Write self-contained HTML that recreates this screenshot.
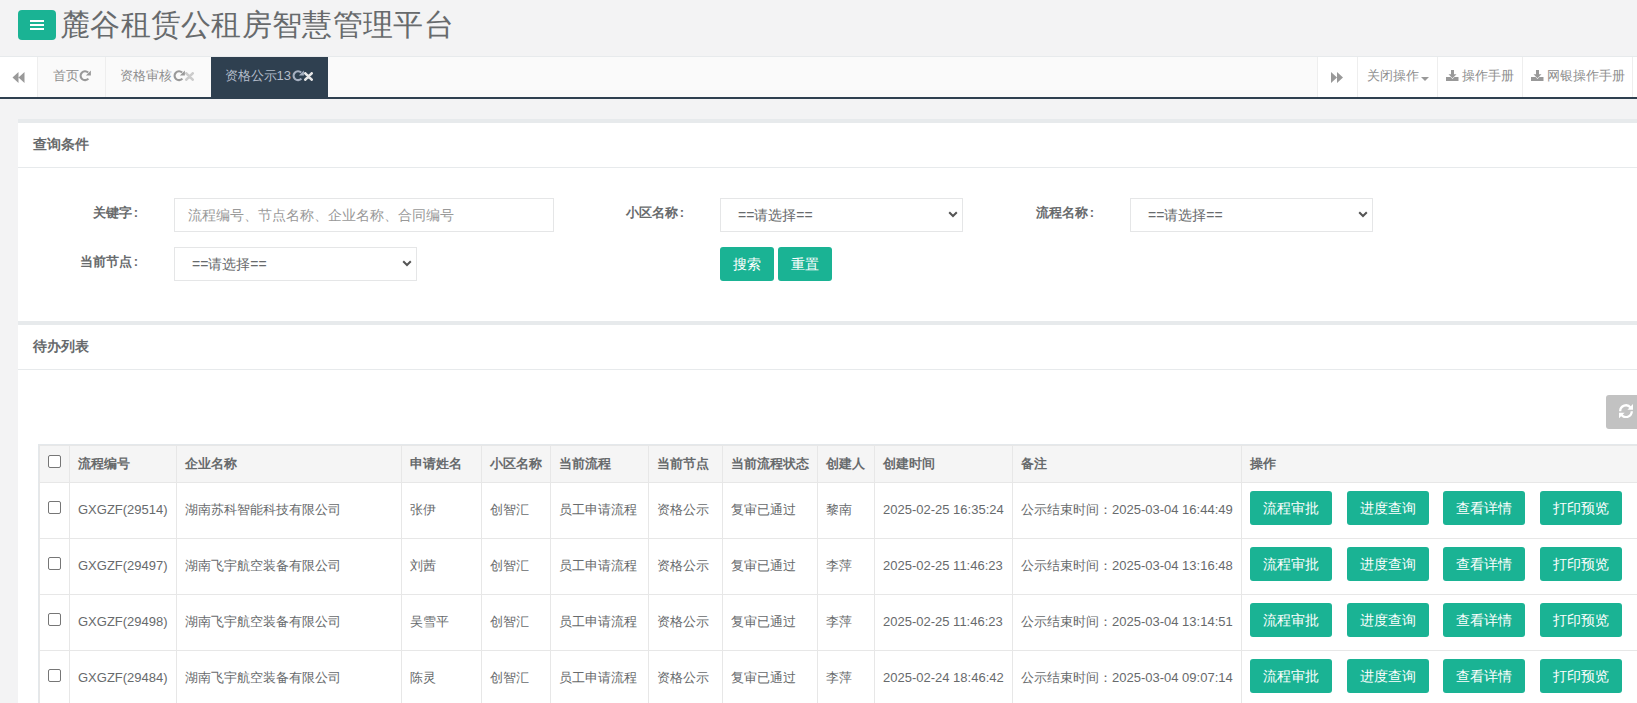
<!DOCTYPE html>
<html><head><meta charset="utf-8">
<style>
*{box-sizing:border-box;margin:0;padding:0}
html,body{width:1637px;height:703px;overflow:hidden}
body{background:#f3f3f4;font-family:"Liberation Sans",sans-serif;color:#676a6c;font-size:13px;position:relative}
.a{position:absolute;white-space:nowrap}
/* header */
#menu{left:18px;top:10px;width:38px;height:30px;background:#1ab394;border-radius:4px}
#menu i{position:absolute;left:12px;width:14px;height:2px;background:#fff}
#title{left:60px;top:4.6px;letter-spacing:0.3px;font-size:30px;line-height:40px;color:#676a6c}
#hdrline{left:0;top:56px;width:1637px;height:1px;background:#e7eaec}
/* tabs */
#tabs{left:0;top:57px;width:1637px;height:42px;background:#fafafa;border-bottom:2px solid #2f4050}
.tb{position:absolute;top:0;height:40px;line-height:38px;color:#8e8e8e;font-size:13px;white-space:nowrap}
.bl{border-left:1px solid #eee}
.br{border-right:1px solid #eee}
/* panels */
.panel{position:absolute;left:18px;width:1619px;background:#fff;border-top:4px solid #e7eaec}
.ptitle{position:absolute;left:15px;top:0;height:44px;line-height:42px;font-weight:bold;font-size:14px;color:#676a6c}
.pline{position:absolute;left:0;top:44px;width:100%;height:1px;background:#e7eaec}
.lbl{position:absolute;font-weight:bold;font-size:13px;line-height:20px;text-align:right;white-space:nowrap}
.ctl{position:absolute;height:34px;border:1px solid #e5e6e7;background:#fff;font-size:14px;line-height:32px;white-space:nowrap;color:#676a6c}
.btn{position:absolute;background:#1ab394;color:#fff;border-radius:3px;text-align:center;font-size:14px;line-height:34px;height:34px;white-space:nowrap}
/* table */
#tbl{position:absolute;left:38px;top:444px;width:1700px;height:300px;border-top:1px solid #e7e7e7;border-left:1px solid #e7e7e7}
.hl{position:absolute;left:0;width:1700px;height:1px;background:#e7e7e7}
.vl{position:absolute;top:0;width:1px;height:300px;background:#e7e7e7}
.cell{position:absolute;font-size:13px;line-height:20px;white-space:nowrap}
.th{font-weight:bold}
.cb{position:absolute;left:10px;width:13px;height:13px;border:1px solid #767676;border-radius:2px;background:#fff}
</style></head><body>

<div class="a" id="menu"><i style="top:10px"></i><i style="top:14px"></i><i style="top:18px"></i></div>
<div class="a" id="title">麓谷租赁公租房智慧管理平台</div>
<div class="a" id="hdrline"></div>

<div class="a" id="tabs">
  <div class="tb br" style="left:0;width:38px;background:#fff"></div>
  <svg class="a" style="left:11.5px;top:14.8px" width="13" height="11" viewBox="0 0 13 11"><path d="M6.5 0 L0.5 5.5 L6.5 11 Z M12.5 0 L6.5 5.5 L12.5 11 Z" fill="#999"/></svg>
  <div class="tb br" style="left:38px;width:68px;padding-left:15px">首页</div>
  <svg class="a" style="left:78.8px;top:13.4px" width="12" height="12" viewBox="0 0 12 12"><path d="M9.4 8.6 A4.45 4.45 0 1 1 9.15 2.55" fill="none" stroke="#999" stroke-width="2.1"/><path d="M11.9 0.6 L11.9 5.6 L6.9 5.6 Z" fill="#999"/></svg>
  <div class="tb" style="left:106px;width:105px;padding-left:14.4px">资格审核</div>
  <svg class="a" style="left:172.8px;top:13.4px" width="12" height="12" viewBox="0 0 12 12"><path d="M9.4 8.6 A4.45 4.45 0 1 1 9.15 2.55" fill="none" stroke="#999" stroke-width="2.1"/><path d="M11.9 0.6 L11.9 5.6 L6.9 5.6 Z" fill="#999"/></svg><svg class="a" style="left:185px;top:14.8px" width="9" height="9" viewBox="0 0 9 9"><path d="M1.3 1.3 L7.7 7.7 M7.7 1.3 L1.3 7.7" stroke="#ccc" stroke-width="2.6" stroke-linecap="round"/></svg>
  <div class="tb" style="left:211px;width:117px;padding-left:13.6px;background:#2f4050;color:#b4bdcb">资格公示13</div>
  <svg class="a" style="left:291.6px;top:13.4px" width="12" height="12" viewBox="0 0 12 12"><path d="M9.4 8.6 A4.45 4.45 0 1 1 9.15 2.55" fill="none" stroke="#a7b1c2" stroke-width="2.1"/><path d="M11.9 0.6 L11.9 5.6 L6.9 5.6 Z" fill="#a7b1c2"/></svg><svg class="a" style="left:304px;top:14.6px" width="9" height="9" viewBox="0 0 9 9"><path d="M1.3 1.3 L7.7 7.7 M7.7 1.3 L1.3 7.7" stroke="#e6e6e6" stroke-width="2.6" stroke-linecap="round"/></svg>
  <div class="tb bl" style="left:1317px;width:41px;background:#fff"></div>
  <svg class="a" style="left:1331px;top:14.8px" width="12" height="11" viewBox="0 0 12 11"><path d="M0 0 L6 5.5 L0 11 Z M6 0 L12 5.5 L6 11 Z" fill="#999"/></svg>
  <div class="tb bl" style="left:1357px;width:81px;background:#fff;padding-left:9px">关闭操作</div>
  <svg class="a" style="left:1421px;top:19.9px" width="8" height="4" viewBox="0 0 8 4"><path d="M0 0 L8 0 L4 4 Z" fill="#999"/></svg>
  <div class="tb bl" style="left:1437px;width:86px;background:#fff;padding-left:24px">操作手册</div>
  <svg class="a" style="left:1446px;top:13px" width="13" height="11" viewBox="0 0 13 11"><path d="M5 0 H8 V4.2 H10.5 L6.5 8.3 L2.5 4.2 H5 Z" fill="#999"/><path d="M0 7 H4.6 L6.5 9 L8.4 7 H12.5 V11 H0 Z" fill="#999"/></svg>
  <div class="tb bl br" style="left:1522px;width:111px;background:#fff;padding-left:24px">网银操作手册</div>
  <svg class="a" style="left:1530.5px;top:13px" width="13" height="11" viewBox="0 0 13 11"><path d="M5 0 H8 V4.2 H10.5 L6.5 8.3 L2.5 4.2 H5 Z" fill="#999"/><path d="M0 7 H4.6 L6.5 9 L8.4 7 H12.5 V11 H0 Z" fill="#999"/></svg>
  <div class="tb" style="left:1633px;width:4px;background:#fff"></div>
</div>
<div class="panel" style="top:119px;height:202px">
  <div class="ptitle">查询条件</div>
  <div class="pline"></div>
</div>

<div class="lbl" style="right:1499px;top:203px">关键字<span style="margin-left:2px">:</span></div>
<div class="ctl" style="left:174px;top:198px;width:380px;padding-left:13px;color:#999">流程编号、节点名称、企业名称、合同编号</div>
<div class="lbl" style="right:953px;top:203px">小区名称<span style="margin-left:2px">:</span></div>
<div class="ctl" style="left:720px;top:198px;width:243px;padding-left:17px">==请选择==</div>
<svg class="a" style="left:948px;top:211px" width="10" height="7" viewBox="0 0 10 7"><path d="M1.2 1.2 L5 5 L8.8 1.2" fill="none" stroke="#555" stroke-width="2"/></svg>
<div class="lbl" style="right:543px;top:203px">流程名称<span style="margin-left:2px">:</span></div>
<div class="ctl" style="left:1130px;top:198px;width:243px;padding-left:17px">==请选择==</div>
<svg class="a" style="left:1358px;top:211px" width="10" height="7" viewBox="0 0 10 7"><path d="M1.2 1.2 L5 5 L8.8 1.2" fill="none" stroke="#555" stroke-width="2"/></svg>
<div class="lbl" style="right:1499px;top:252px">当前节点<span style="margin-left:2px">:</span></div>
<div class="ctl" style="left:174px;top:247px;width:243px;padding-left:17px">==请选择==</div>
<svg class="a" style="left:402px;top:260px" width="10" height="7" viewBox="0 0 10 7"><path d="M1.2 1.2 L5 5 L8.8 1.2" fill="none" stroke="#555" stroke-width="2"/></svg>
<div class="btn" style="left:720px;top:247px;width:54px">搜索</div>
<div class="btn" style="left:778px;top:247px;width:54px">重置</div>
<div class="panel" style="top:321px;height:400px">
  <div class="ptitle">待办列表</div>
  <div class="pline"></div>
</div>

<div class="a" style="left:1606px;top:395px;width:40px;height:34px;background:#c2c2c2;border-radius:3px"></div>
<svg class="a" style="left:1619px;top:403.8px" width="14" height="14.4" viewBox="0 0 14 14.4"><path d="M1.2 7.2 A5.8 5.8 0 0 1 11.6 3.6" fill="none" stroke="#fff" stroke-width="2.3"/><path d="M14 0.1 L14 5.7 L8.4 5.7 Z" fill="#fff"/><path d="M12.8 7.2 A5.8 5.8 0 0 1 2.4 10.8" fill="none" stroke="#fff" stroke-width="2.3"/><path d="M0 14.3 L0 8.7 L5.6 8.7 Z" fill="#fff"/></svg>
<div class="a" style="left:38px;top:444px;width:1599px;height:38px;background:#f5f5f5"></div>
<div class="a" style="left:38px;top:483px;width:1599px;height:230px;background:#fff"></div>
<div class="a" style="left:38px;top:444px;width:1599px;height:1px;background:#e4e8eb"></div><div class="a" style="left:39px;top:445px;width:1598px;height:1px;background:#e7e7e7"></div>
<div class="a" style="left:38px;top:444px;width:1px;height:270px;background:#e4e8eb"></div><div class="a" style="left:39px;top:445px;width:1px;height:270px;background:#e7e7e7"></div>
<div class="a" style="left:38px;top:482px;width:1599px;height:1px;background:#e7e7e7"></div>
<div class="a" style="left:38px;top:538px;width:1599px;height:1px;background:#e7e7e7"></div>
<div class="a" style="left:38px;top:594px;width:1599px;height:1px;background:#e7e7e7"></div>
<div class="a" style="left:38px;top:650px;width:1599px;height:1px;background:#e7e7e7"></div>
<div class="a" style="left:38px;top:706px;width:1599px;height:1px;background:#e7e7e7"></div>
<div class="a" style="left:69px;top:446px;width:1px;height:270px;background:#e7e7e7"></div>
<div class="a" style="left:176px;top:446px;width:1px;height:270px;background:#e7e7e7"></div>
<div class="a" style="left:401px;top:446px;width:1px;height:270px;background:#e7e7e7"></div>
<div class="a" style="left:481px;top:446px;width:1px;height:270px;background:#e7e7e7"></div>
<div class="a" style="left:550px;top:446px;width:1px;height:270px;background:#e7e7e7"></div>
<div class="a" style="left:648px;top:446px;width:1px;height:270px;background:#e7e7e7"></div>
<div class="a" style="left:722px;top:446px;width:1px;height:270px;background:#e7e7e7"></div>
<div class="a" style="left:817px;top:446px;width:1px;height:270px;background:#e7e7e7"></div>
<div class="a" style="left:874px;top:446px;width:1px;height:270px;background:#e7e7e7"></div>
<div class="a" style="left:1012px;top:446px;width:1px;height:270px;background:#e7e7e7"></div>
<div class="a" style="left:1241px;top:446px;width:1px;height:270px;background:#e7e7e7"></div>
<div class="cell th" style="left:78px;top:446px;line-height:36px">流程编号</div>
<div class="cell th" style="left:185px;top:446px;line-height:36px">企业名称</div>
<div class="cell th" style="left:410px;top:446px;line-height:36px">申请姓名</div>
<div class="cell th" style="left:490px;top:446px;line-height:36px">小区名称</div>
<div class="cell th" style="left:559px;top:446px;line-height:36px">当前流程</div>
<div class="cell th" style="left:657px;top:446px;line-height:36px">当前节点</div>
<div class="cell th" style="left:731px;top:446px;line-height:36px">当前流程状态</div>
<div class="cell th" style="left:826px;top:446px;line-height:36px">创建人</div>
<div class="cell th" style="left:883px;top:446px;line-height:36px">创建时间</div>
<div class="cell th" style="left:1021px;top:446px;line-height:36px">备注</div>
<div class="cell th" style="left:1250px;top:446px;line-height:36px">操作</div>
<div class="cb" style="left:48px;top:455px"></div>
<div class="cb" style="left:48px;top:501px"></div>
<div class="cell" style="left:78px;top:481.5px;line-height:55px">GXGZF(29514)</div>
<div class="cell" style="left:185px;top:481.5px;line-height:55px">湖南苏科智能科技有限公司</div>
<div class="cell" style="left:410px;top:481.5px;line-height:55px">张伊</div>
<div class="cell" style="left:490px;top:481.5px;line-height:55px">创智汇</div>
<div class="cell" style="left:559px;top:481.5px;line-height:55px">员工申请流程</div>
<div class="cell" style="left:657px;top:481.5px;line-height:55px">资格公示</div>
<div class="cell" style="left:731px;top:481.5px;line-height:55px">复审已通过</div>
<div class="cell" style="left:826px;top:481.5px;line-height:55px">黎南</div>
<div class="cell" style="left:883px;top:481.5px;line-height:55px">2025-02-25 16:35:24</div>
<div class="cell" style="left:1021px;top:481.5px;line-height:55px">公示结束时间：2025-03-04 16:44:49</div>
<div class="btn" style="left:1250px;top:491px;width:82px">流程审批</div>
<div class="btn" style="left:1347px;top:491px;width:82px">进度查询</div>
<div class="btn" style="left:1443px;top:491px;width:82px">查看详情</div>
<div class="btn" style="left:1540px;top:491px;width:82px">打印预览</div>
<div class="cb" style="left:48px;top:557px"></div>
<div class="cell" style="left:78px;top:537.5px;line-height:55px">GXGZF(29497)</div>
<div class="cell" style="left:185px;top:537.5px;line-height:55px">湖南飞宇航空装备有限公司</div>
<div class="cell" style="left:410px;top:537.5px;line-height:55px">刘茜</div>
<div class="cell" style="left:490px;top:537.5px;line-height:55px">创智汇</div>
<div class="cell" style="left:559px;top:537.5px;line-height:55px">员工申请流程</div>
<div class="cell" style="left:657px;top:537.5px;line-height:55px">资格公示</div>
<div class="cell" style="left:731px;top:537.5px;line-height:55px">复审已通过</div>
<div class="cell" style="left:826px;top:537.5px;line-height:55px">李萍</div>
<div class="cell" style="left:883px;top:537.5px;line-height:55px">2025-02-25 11:46:23</div>
<div class="cell" style="left:1021px;top:537.5px;line-height:55px">公示结束时间：2025-03-04 13:16:48</div>
<div class="btn" style="left:1250px;top:547px;width:82px">流程审批</div>
<div class="btn" style="left:1347px;top:547px;width:82px">进度查询</div>
<div class="btn" style="left:1443px;top:547px;width:82px">查看详情</div>
<div class="btn" style="left:1540px;top:547px;width:82px">打印预览</div>
<div class="cb" style="left:48px;top:613px"></div>
<div class="cell" style="left:78px;top:593.5px;line-height:55px">GXGZF(29498)</div>
<div class="cell" style="left:185px;top:593.5px;line-height:55px">湖南飞宇航空装备有限公司</div>
<div class="cell" style="left:410px;top:593.5px;line-height:55px">吴雪平</div>
<div class="cell" style="left:490px;top:593.5px;line-height:55px">创智汇</div>
<div class="cell" style="left:559px;top:593.5px;line-height:55px">员工申请流程</div>
<div class="cell" style="left:657px;top:593.5px;line-height:55px">资格公示</div>
<div class="cell" style="left:731px;top:593.5px;line-height:55px">复审已通过</div>
<div class="cell" style="left:826px;top:593.5px;line-height:55px">李萍</div>
<div class="cell" style="left:883px;top:593.5px;line-height:55px">2025-02-25 11:46:23</div>
<div class="cell" style="left:1021px;top:593.5px;line-height:55px">公示结束时间：2025-03-04 13:14:51</div>
<div class="btn" style="left:1250px;top:603px;width:82px">流程审批</div>
<div class="btn" style="left:1347px;top:603px;width:82px">进度查询</div>
<div class="btn" style="left:1443px;top:603px;width:82px">查看详情</div>
<div class="btn" style="left:1540px;top:603px;width:82px">打印预览</div>
<div class="cb" style="left:48px;top:669px"></div>
<div class="cell" style="left:78px;top:649.5px;line-height:55px">GXGZF(29484)</div>
<div class="cell" style="left:185px;top:649.5px;line-height:55px">湖南飞宇航空装备有限公司</div>
<div class="cell" style="left:410px;top:649.5px;line-height:55px">陈灵</div>
<div class="cell" style="left:490px;top:649.5px;line-height:55px">创智汇</div>
<div class="cell" style="left:559px;top:649.5px;line-height:55px">员工申请流程</div>
<div class="cell" style="left:657px;top:649.5px;line-height:55px">资格公示</div>
<div class="cell" style="left:731px;top:649.5px;line-height:55px">复审已通过</div>
<div class="cell" style="left:826px;top:649.5px;line-height:55px">李萍</div>
<div class="cell" style="left:883px;top:649.5px;line-height:55px">2025-02-24 18:46:42</div>
<div class="cell" style="left:1021px;top:649.5px;line-height:55px">公示结束时间：2025-03-04 09:07:14</div>
<div class="btn" style="left:1250px;top:659px;width:82px">流程审批</div>
<div class="btn" style="left:1347px;top:659px;width:82px">进度查询</div>
<div class="btn" style="left:1443px;top:659px;width:82px">查看详情</div>
<div class="btn" style="left:1540px;top:659px;width:82px">打印预览</div>
</body></html>
